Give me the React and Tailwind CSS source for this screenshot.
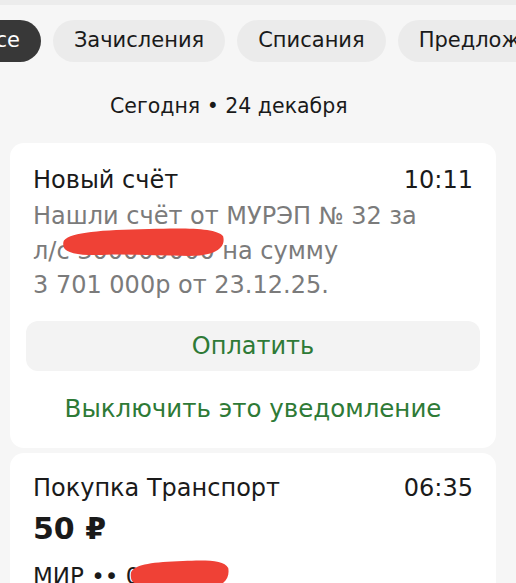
import React from 'react';

const chips = ['Все', 'Зачисления', 'Списания', 'Предложения'];

function Scribble({ className }) {
    return (
        <svg className={className} viewBox="0 0 170 30" preserveAspectRatio="none">
            <path
                d="M2 13 C10 5 40 3 90 2 C130 1 160 1 167 9 C170 19 161 28 132 28 C102 28 72 26 42 27 C20 28 4 25 2 20 C1 17 1 15 2 13 Z"
                fill="#ef4136"
            />
        </svg>
    );
}

function Card({ children }) {
    return <div className="bg-white rounded-[14px] px-[23px] pt-[20px] pb-[24px]">{children}</div>;
}

export default function App() {
    return (
        <div
            className="w-[516px] h-[583px] overflow-hidden bg-[#f6f6f6] text-[#1a1a1a]"
            style={{ fontFamily: '"DejaVu Sans", "Noto Sans", sans-serif' }}
        >
            <div className="h-[5px] bg-[#ececec]" />
            <div className="flex gap-[12px] mt-[15px] ml-[-40px] whitespace-nowrap">
                {chips.map((c, i) => (
                    <div
                        key={c}
                        className={
                            i === 0
                                ? 'h-[42px] px-[21px] rounded-full bg-[#383838] text-white text-[21px] flex items-center'
                                : 'h-[42px] px-[21px] rounded-full bg-[#ebebeb] text-[21px] flex items-center'
                        }
                    >
                        {c}
                    </div>
                ))}
            </div>
            <div className="pl-[110px] mt-[31px] text-[20.5px] leading-[26px]">Сегодня • 24 декабря</div>

            <div className="px-[10px] mt-[24px] flex flex-col gap-[5px] w-[506px]">
                <Card>
                    <div className="flex justify-between text-[24px] leading-[30px] pt-[2px]">
                        <span>Новый счёт</span>
                        <span>10:11</span>
                    </div>
                    <div className="relative mt-[4px] text-[24px] leading-[34.5px] text-[#7b7b7b]">
                        <div>Нашли счёт от МУРЭП № 32 за</div>
                        <div>л/с 300000000 на сумму</div>
                        <div>3 701 000р от 23.12.25.</div>
                        <Scribble className="absolute left-[29px] top-[28px] w-[164px] h-[31px]" />
                    </div>
                    <div className="mt-[18px] -mx-[7px] h-[50px] rounded-[12px] bg-[#f3f3f3] flex items-center justify-center text-[24px] text-[#2e7a36]">
                        Оплатить
                    </div>
                    <div className="mt-[23px] text-center text-[24.5px] leading-[30px] text-[#2e7a36]">
                        Выключить это уведомление
                    </div>
                </Card>
                <Card>
                    <div className="flex justify-between text-[24px] leading-[30px]">
                        <span>Покупка Транспорт</span>
                        <span>06:35</span>
                    </div>
                    <div className="mt-[6px] text-[30px] leading-[40px] font-semibold">50 ₽</div>
                    <div className="relative mt-[12px] text-[23px] leading-[30px]">
                        <span>МИР •• 0000</span>
                        <Scribble className="absolute left-[97px] top-[-2px] w-[100px] h-[30px]" />
                    </div>
                </Card>
            </div>
        </div>
    );
}
